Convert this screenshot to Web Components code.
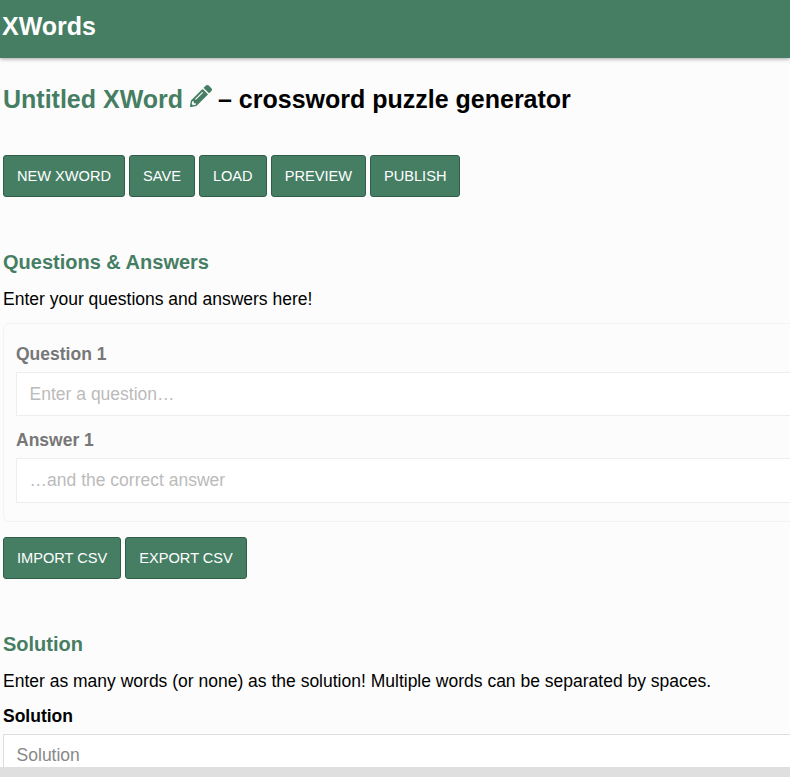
<!DOCTYPE html>
<html lang="en">
<head>
<meta charset="utf-8">
<title>XWords</title>
<style>
  html, body { margin: 0; height: 100%; overflow: hidden; }
  body {
    display: flex;
    flex-direction: column;
    background: #fcfcfc;
    color: #000;
    font-family: "Liberation Sans", Arial, sans-serif;
    font-size: 17.5px;
  }
  main { flex: 1; min-height: 0; overflow: hidden; padding: 0 0 0 3px; }
  .wide { width: 900px; }
</style>
</head>
<body>
<app-bar>XWords</app-bar>
<main>
  <puzzle-title name="Untitled XWord">– crossword puzzle generator</puzzle-title>
  <button-row style="--row-top: 41px">
    <x-button>New XWord</x-button>
    <x-button>Save</x-button>
    <x-button>Load</x-button>
    <x-button>Preview</x-button>
    <x-button>Publish</x-button>
  </button-row>
  <section-head style="--head-top: 53px">Questions &amp; Answers</section-head>
  <info-text>Enter your questions and answers here!</info-text>
  <qa-card class="wide">
    <form-field label="Question 1" placeholder="Enter a question…" muted></form-field>
    <form-field label="Answer 1" placeholder="…and the correct answer" muted></form-field>
  </qa-card>
  <button-row style="--row-top: 15px">
    <x-button>Import CSV</x-button>
    <x-button>Export CSV</x-button>
  </button-row>
  <section-head style="--head-top: 53px">Solution</section-head>
  <info-text>Enter as many words (or none) as the solution! Multiple words can be separated by spaces.</info-text>
  <form-field class="wide" style="margin-top: 14px" label="Solution" placeholder="Solution"></form-field>
</main>
<fake-scrollbar></fake-scrollbar>

<script>
class AppBar extends HTMLElement {
  constructor() {
    super();
    this.attachShadow({ mode: "open" }).innerHTML = `
      <style>
        :host {
          display: flex;
          align-items: center;
          flex: none;
          height: 58px;
          padding: 0 0 6px 2px;
          box-sizing: border-box;
          background: #467e64;
          color: #fff;
          font-size: 25px;
          font-weight: 700;
          box-shadow: 0 1px 4px rgba(0, 0, 0, 0.35);
        }
      </style>
      <slot></slot>`;
  }
}

class PuzzleTitle extends HTMLElement {
  constructor() {
    super();
    this.attachShadow({ mode: "open" }).innerHTML = `
      <style>
        :host {
          display: block;
          margin-top: 27px;
          font-size: 25px;
          line-height: 29px;
          font-weight: 700;
        }
        .name { color: #467e64; }
        svg { width: 22px; height: 22px; fill: #467e64; vertical-align: 1px; margin: 0 -1px 0 0; }
      </style>
      <span class="name"></span>
      <svg viewBox="0 0 512 512"><path d="M497.9 142.1l-46.1 46.1c-4.7 4.7-12.3 4.7-17 0l-111-111c-4.7-4.7-4.7-12.3 0-17l46.1-46.1c18.7-18.7 49.1-18.7 67.9 0l60.1 60.1c18.8 18.7 18.8 49.1 0 67.9zM284.2 99.8L21.6 362.4.4 483.9c-2.9 16.4 11.4 30.6 27.8 27.8l121.5-21.3 262.6-262.6c4.7-4.7 4.7-12.3 0-17l-111-111c-4.8-4.7-12.4-4.7-17.1 0zM124.1 339.9c-5.5-5.5-5.5-14.3 0-19.8l154-154c5.5-5.5 14.3-5.5 19.8 0s5.5 14.3 0 19.8l-154 154c-5.5 5.5-14.3 5.5-19.8 0zM88 424h48v36.3l-64.5 11.3-31.1-31.1L51.7 376H88v48z"/></svg>
      <slot></slot>`;
  }

  connectedCallback() {
    this.shadowRoot.querySelector(".name").textContent = this.getAttribute("name");
  }
}

class ButtonRow extends HTMLElement {
  constructor() {
    super();
    this.attachShadow({ mode: "open" }).innerHTML = `
      <style>
        :host { display: flex; gap: 4px; margin-top: var(--row-top, 0); }
      </style>
      <slot></slot>`;
  }
}

class XButton extends HTMLElement {
  constructor() {
    super();
    this.attachShadow({ mode: "open" }).innerHTML = `
      <style>
        :host { display: block; }
        button {
          display: block;
          height: 42px;
          padding: 0 13px;
          border: 1px solid #2f5f49;
          border-radius: 3px;
          background: #467e64;
          color: #fff;
          font: 14.6px "Liberation Sans", Arial, sans-serif;
          text-transform: uppercase;
        }
      </style>
      <button type="button"><slot></slot></button>`;
  }
}

class SectionHead extends HTMLElement {
  constructor() {
    super();
    this.attachShadow({ mode: "open" }).innerHTML = `
      <style>
        :host {
          display: block;
          margin-top: var(--head-top, 0);
          color: #467e64;
          font-size: 20px;
          line-height: 24px;
          font-weight: 700;
        }
      </style>
      <slot></slot>`;
  }
}

class InfoText extends HTMLElement {
  constructor() {
    super();
    this.attachShadow({ mode: "open" }).innerHTML = `
      <style>
        :host { display: block; margin-top: 14px; font-size: 17.5px; line-height: 22px; white-space: nowrap; }
      </style>
      <slot></slot>`;
  }
}

class QaCard extends HTMLElement {
  constructor() {
    super();
    this.attachShadow({ mode: "open" }).innerHTML = `
      <style>
        :host {
          display: flex;
          flex-direction: column;
          gap: 14px;
          box-sizing: border-box;
          margin-top: 13px;
          padding: 20px 12px 18px;
          border: 1px solid #f3f3f3;
          border-radius: 6px;
        }
      </style>
      <slot></slot>`;
  }
}

class FormField extends HTMLElement {
  constructor() {
    super();
    this.attachShadow({ mode: "open" }).innerHTML = `
      <style>
        :host { display: block; }
        label { display: block; font-size: 17.5px; line-height: 20px; font-weight: 700; margin-bottom: 8px; }
        input {
          display: block;
          box-sizing: border-box;
          width: 100%;
          height: 44.4px;
          padding: 0 12.6px;
          border: 1px solid #ddd;
          background: #fff;
          font: 17.5px "Liberation Sans", Arial, sans-serif;
          outline: none;
        }
        input::placeholder { color: #888; opacity: 1; }
        :host([muted]) label { color: #777; }
        :host([muted]) input { border-color: #eee; }
        :host([muted]) input::placeholder { color: #bbb; }
      </style>
      <label></label>
      <input type="text">`;
  }

  connectedCallback() {
    this.shadowRoot.querySelector("label").textContent = this.getAttribute("label");
    this.shadowRoot.querySelector("input").placeholder = this.getAttribute("placeholder");
  }
}

class FakeScrollbar extends HTMLElement {
  constructor() {
    super();
    this.attachShadow({ mode: "open" }).innerHTML = `
      <style>
        :host { display: block; flex: none; height: 10px; background: #dfdfdf; }
      </style>`;
  }
}

customElements.define("app-bar", AppBar);
customElements.define("puzzle-title", PuzzleTitle);
customElements.define("button-row", ButtonRow);
customElements.define("x-button", XButton);
customElements.define("section-head", SectionHead);
customElements.define("info-text", InfoText);
customElements.define("qa-card", QaCard);
customElements.define("form-field", FormField);
customElements.define("fake-scrollbar", FakeScrollbar);
</script>
</body>
</html>
